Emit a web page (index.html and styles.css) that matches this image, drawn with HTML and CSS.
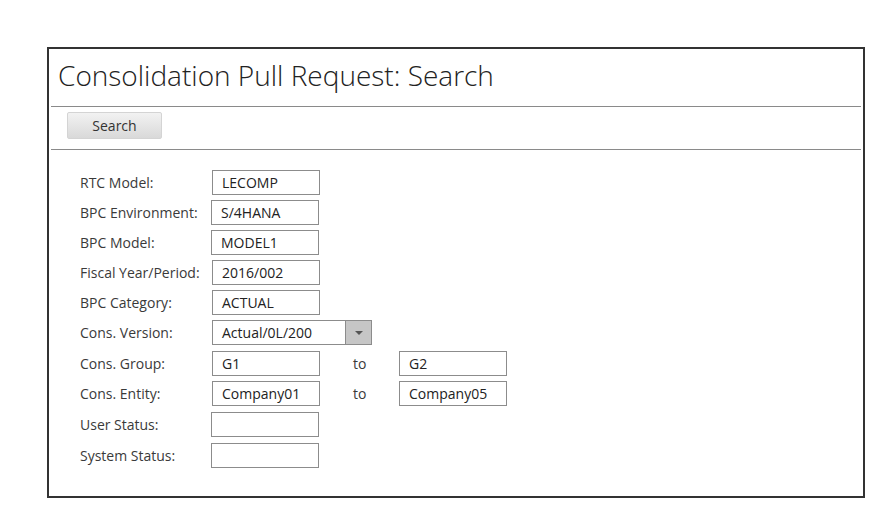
FILE: index.html
```html
<!DOCTYPE html>
<html>
<head>
<meta charset="utf-8">
<link rel="stylesheet" href="styles.css">
</head>
<body>
<div class="panel">
  <h1 class="title">Consolidation Pull Request: Search</h1>
  <div class="toolbar">
    <button class="btn">Search</button>
  </div>
  <div class="form">
    <div class="row"><span class="label">RTC Model:</span><span class="field">LECOMP</span></div>
    <div class="row"><span class="label">BPC Environment:</span><span class="field shift">S/4HANA</span></div>
    <div class="row"><span class="label">BPC Model:</span><span class="field shift">MODEL1</span></div>
    <div class="row"><span class="label">Fiscal Year/Period:</span><span class="field">2016/002</span></div>
    <div class="row"><span class="label">BPC Category:</span><span class="field">ACTUAL</span></div>
    <div class="row"><span class="label">Cons. Version:</span><span class="select"><span class="select-value">Actual/0L/200</span><span class="select-btn"><span class="tri"></span></span></span></div>
    <div class="row extra"><span class="label">Cons. Group:</span><span class="field">G1</span><span class="to">to</span><span class="field">G2</span></div>
    <div class="row"><span class="label">Cons. Entity:</span><span class="field">Company01</span><span class="to">to</span><span class="field">Company05</span></div>
    <div class="row extra"><span class="label">User Status:</span><span class="field shift"></span></div>
    <div class="row extra"><span class="label">System Status:</span><span class="field shift"></span></div>
  </div>
</div>
</body>
</html>
```

FILE: styles.css
```css
html, body {
  margin: 0;
  padding: 0;
  background: #ffffff;
}
body {
  font-family: "Open Sans", "Noto Sans", sans-serif;
  color: #333;
}
.panel {
  margin: 47px 0 0 47px;
  width: 818px;
  border: 2px solid #333;
  box-sizing: border-box;
  padding-bottom: 28px;
}
.title {
  margin: 0 2px;
  padding: 8px 0 0 7px;
  height: 49px;
  font-size: 28px;
  font-weight: 300;
  line-height: 37px;
  color: #222;
  border-bottom: 1px solid #8a8a8a;
}
.toolbar {
  margin: 0 2px;
  padding: 5px 0 0 16px;
  height: 37px;
  border-bottom: 1px solid #8a8a8a;
}
.btn {
  display: block;
  margin: 0;
  width: 95px;
  height: 27px;
  border: 1px solid #d4d4d4;
  border-radius: 2px;
  background: linear-gradient(#f2f2f2, #d9d9d9);
  font-family: "Open Sans", "Noto Sans", sans-serif;
  font-size: 14px;
  color: #333;
  padding: 0;
}
.form {
  padding: 20px 0 0 31px;
  display: flex;
  flex-direction: column;
  gap: 5px;
}
.row {
  display: flex;
  align-items: center;
  height: 25px;
}
.row.extra {
  margin-top: 1px;
}
.label {
  width: 132px;
  font-size: 14px;
  color: #3a3a3a;
}
.field {
  box-sizing: border-box;
  width: 108px;
  height: 25px;
  border: 1px solid #8c8c8c;
  padding: 0 9px;
  font-size: 14px;
  line-height: 23px;
  color: #222;
}
.field.shift {
  margin-left: -1px;
}
.to {
  width: 79px;
  padding-left: 33px;
  box-sizing: border-box;
  font-size: 14px;
  color: #3a3a3a;
}
.select {
  box-sizing: border-box;
  display: flex;
  width: 160px;
  height: 25px;
  border: 1px solid #8c8c8c;
}
.select-value {
  flex: 1;
  padding: 0 9px;
  font-size: 14px;
  line-height: 23px;
  color: #222;
}
.select-btn {
  width: 25px;
  background: #c6c6c6;
  border-left: 1px solid #8c8c8c;
  display: flex;
  align-items: center;
  justify-content: center;
}
.tri {
  width: 0;
  height: 0;
  border-left: 4px solid transparent;
  border-right: 4px solid transparent;
  border-top: 4px solid #555;
}
```
